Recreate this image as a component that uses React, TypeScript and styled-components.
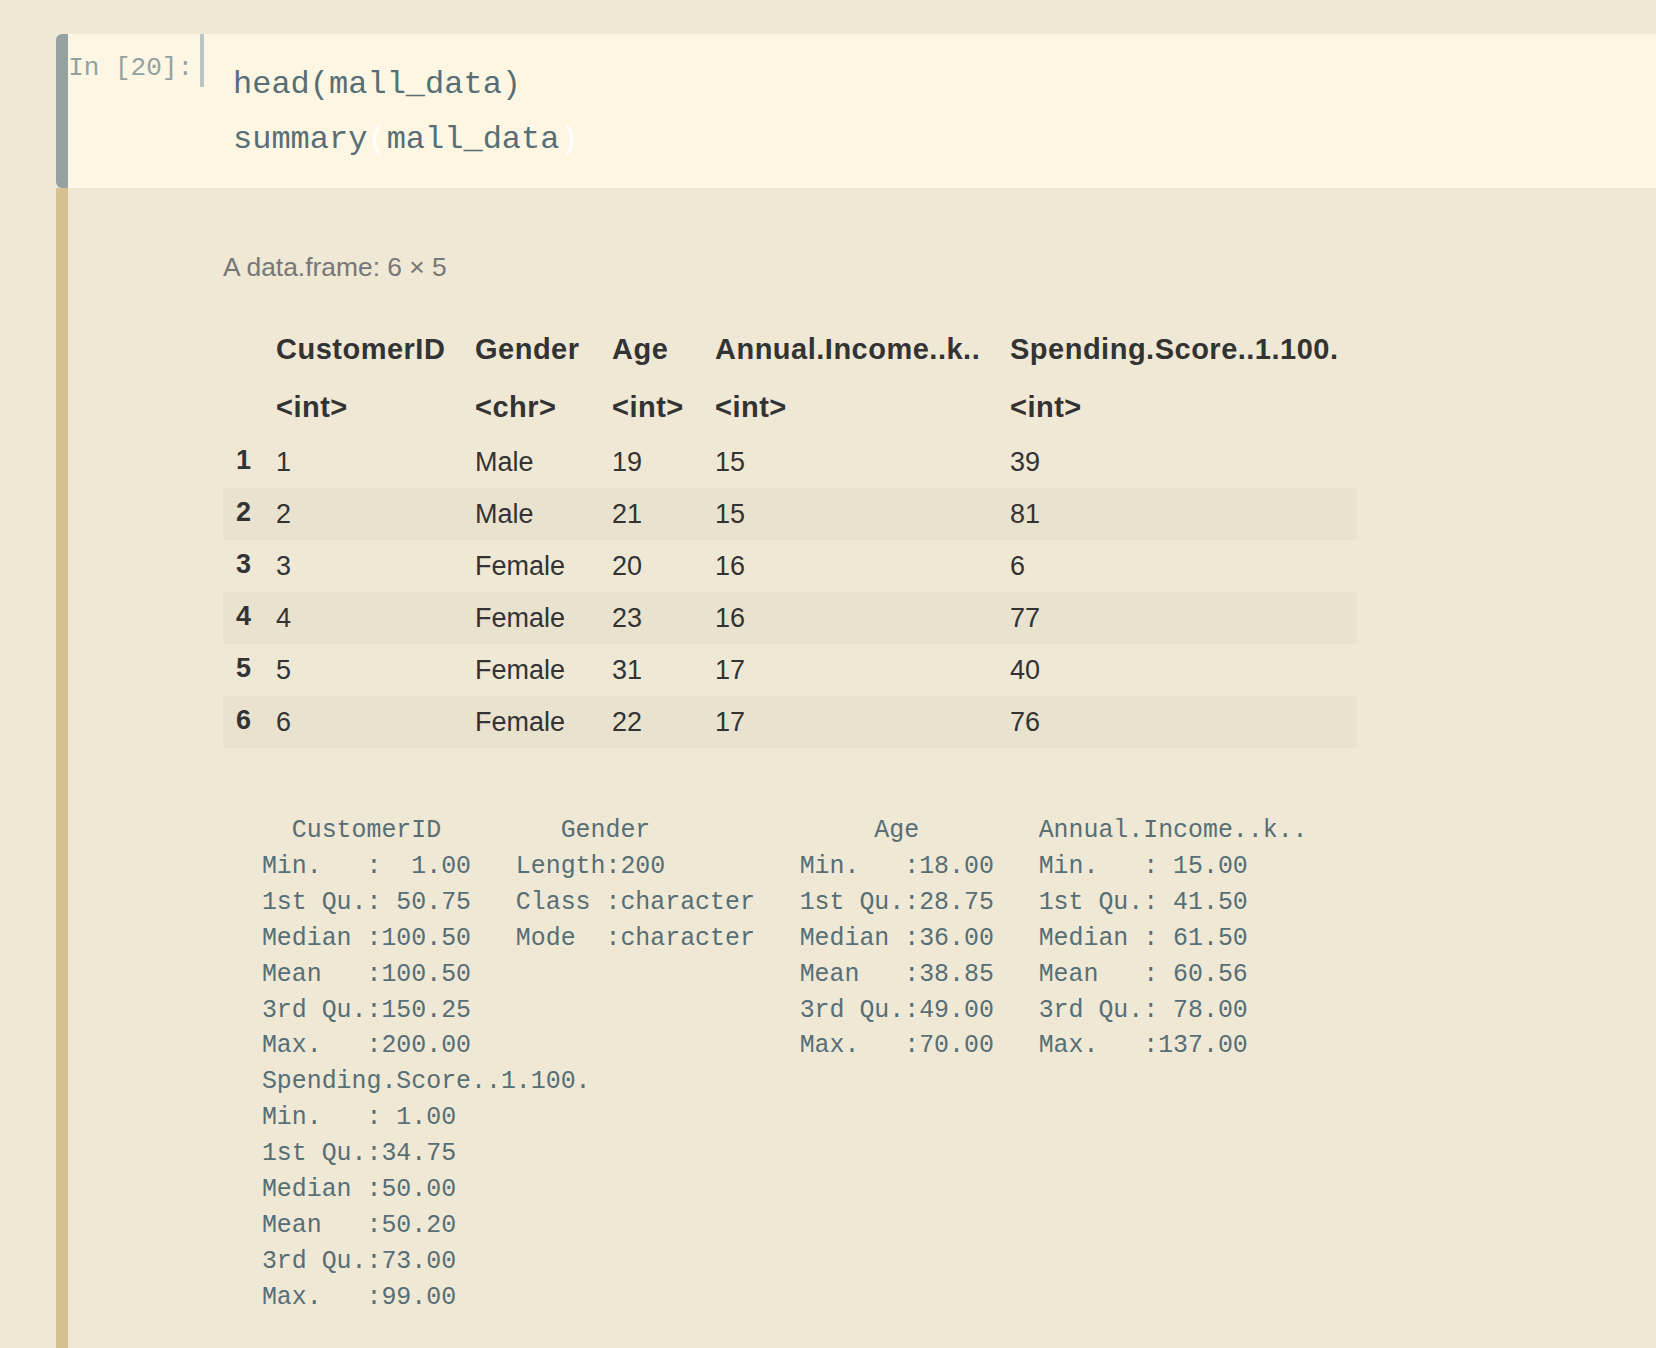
import React from "react";
import styled, { createGlobalStyle } from "styled-components";

const GlobalStyle = createGlobalStyle`
  html, body {
    margin: 0;
    padding: 0;
    background: #eee8d5;
  }
  * {
    box-sizing: border-box;
  }
`;

const Page = styled.div`
  display: flex;
  flex-direction: column;
  min-height: 100vh;
  padding: 34px 0 0 56px;
  background: #eee8d5;
`;

const Cell = styled.div`
  display: flex;
  flex-direction: column;
  flex: 1;
`;

const InputArea = styled.div`
  display: flex;
  height: 154px;
  background: #fdf6e3;
  border-left: 12px solid #95a2a2;
  border-radius: 6px 0 0 6px;
`;

const Prompt = styled.div`
  flex: 0 0 auto;
  align-self: flex-start;
  width: 136px;
  padding: 19px 7px 3px 0;
  border-right: 4px solid #bac4c3;
  text-align: right;
  font-family: "Liberation Mono", "Courier New", monospace;
  font-size: 26px;
  line-height: 31px;
  color: #93a1a1;
`;

const Code = styled.pre`
  margin: 0;
  padding: 23px 0 21px 29px;
  font-family: "Liberation Mono", "Courier New", monospace;
  font-size: 32px;
  line-height: 55px;
  color: #586e75;
`;

const Bracket = styled.span`
  color: #ffffff;
`;

const OutputArea = styled.div`
  flex: 1;
  border-left: 12px solid #d4c18f;
  padding: 63px 0 35px 155px;
`;

const Caption = styled.div`
  font-family: "Liberation Sans", Arial, sans-serif;
  font-size: 26.4px;
  line-height: 32px;
  color: #777;
  margin-bottom: 37px;
`;

const DataTable = styled.table`
  border-collapse: collapse;
  border-spacing: 0;
  table-layout: fixed;
  width: 1134px;
  font-family: "Liberation Sans", Arial, sans-serif;
  color: #333;
`;

const Row = styled.tr<{ $height: number; $striped?: boolean }>`
  height: ${({ $height }) => $height}px;
  background: ${({ $striped }) => ($striped ? "#e8e2cf" : "transparent")};
`;

const HeadCell = styled.th`
  padding: 0 13px;
  text-align: left;
  vertical-align: middle;
  font-size: 29px;
  letter-spacing: 0.5px;
  font-weight: 700;
  white-space: nowrap;
`;

const IndexCell = styled.th`
  padding: 0 0 4px 13px;
  text-align: left;
  vertical-align: middle;
  font-size: 27px;
  font-weight: 700;
`;

const DataCell = styled.td`
  padding: 0 13px;
  text-align: left;
  vertical-align: middle;
  font-size: 27px;
  white-space: nowrap;
`;

const Summary = styled.pre`
  margin: 65px 0 0 24px;
  font-family: "Liberation Mono", "Courier New", monospace;
  font-size: 24.9px;
  line-height: 35.9px;
  color: #586e75;
`;

const columnWidths = [40, 199, 137, 103, 295, 360];

const columns = [
  { name: "CustomerID", type: "<int>" },
  { name: "Gender", type: "<chr>" },
  { name: "Age", type: "<int>" },
  { name: "Annual.Income..k..", type: "<int>" },
  { name: "Spending.Score..1.100.", type: "<int>" },
];

const rows = [
  ["1", "Male", "19", "15", "39"],
  ["2", "Male", "21", "15", "81"],
  ["3", "Female", "20", "16", "6"],
  ["4", "Female", "23", "16", "77"],
  ["5", "Female", "31", "17", "40"],
  ["6", "Female", "22", "17", "76"],
];

const summaryText = [
  "   CustomerID        Gender               Age        Annual.Income..k..",
  " Min.   :  1.00   Length:200         Min.   :18.00   Min.   : 15.00   ",
  " 1st Qu.: 50.75   Class :character   1st Qu.:28.75   1st Qu.: 41.50   ",
  " Median :100.50   Mode  :character   Median :36.00   Median : 61.50   ",
  " Mean   :100.50                      Mean   :38.85   Mean   : 60.56   ",
  " 3rd Qu.:150.25                      3rd Qu.:49.00   3rd Qu.: 78.00   ",
  " Max.   :200.00                      Max.   :70.00   Max.   :137.00   ",
  " Spending.Score..1.100.",
  " Min.   : 1.00         ",
  " 1st Qu.:34.75         ",
  " Median :50.00         ",
  " Mean   :50.20         ",
  " 3rd Qu.:73.00         ",
  " Max.   :99.00         ",
].join("\n");

const App: React.FC = () => {
  return (
    <>
      <GlobalStyle />
      <Page>
        <Cell>
          <InputArea>
            <Prompt>In [20]:</Prompt>
            <Code>
              {"head(mall_data)\n"}
              summary<Bracket>(</Bracket>mall_data<Bracket>)</Bracket>
            </Code>
          </InputArea>

          <OutputArea>
            <Caption>A data.frame: 6 × 5</Caption>
            <DataTable>
              <colgroup>
                {columnWidths.map((w, i) => (
                  <col key={i} style={{ width: w }} />
                ))}
              </colgroup>
              <thead>
                <Row $height={58}>
                  <HeadCell />
                  {columns.map((c) => (
                    <HeadCell key={c.name}>{c.name}</HeadCell>
                  ))}
                </Row>
                <Row $height={58}>
                  <HeadCell />
                  {columns.map((c) => (
                    <HeadCell key={c.name}>{c.type}</HeadCell>
                  ))}
                </Row>
              </thead>
              <tbody>
                {rows.map((r, i) => (
                  <Row key={i} $height={52} $striped={i % 2 === 1}>
                    <IndexCell>{i + 1}</IndexCell>
                    {r.map((v, j) => (
                      <DataCell key={j}>{v}</DataCell>
                    ))}
                  </Row>
                ))}
              </tbody>
            </DataTable>

            <Summary>{summaryText}</Summary>
          </OutputArea>
        </Cell>
      </Page>
    </>
  );
};

export default App;
